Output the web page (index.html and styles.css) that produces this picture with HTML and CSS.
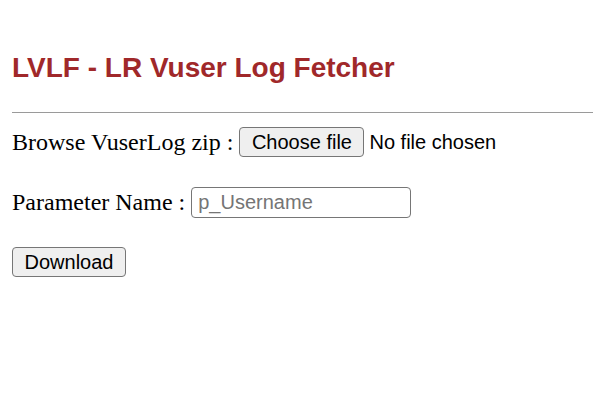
FILE: index.html
```html
<!DOCTYPE html>
<html>
<head>
<meta charset="utf-8">
<link rel="stylesheet" href="styles.css">
</head>
<body>
<h3 class="title">LVLF - LR Vuser Log Fetcher</h3>
<hr class="rule">
<form class="form">
  <p class="row">Browse VuserLog zip : <button type="button" class="btn">Choose file</button><span class="nofile">No file chosen</span></p>
  <p class="row">Parameter Name : <input class="field" type="text" placeholder="p_Username"></p>
  <p class="row"><button type="button" class="btn">Download</button></p>
</form>
</body>
</html>
```
FILE: styles.css
```css
html, body { margin: 0; padding: 0; background: #fff; }
body {
  padding: 52px 0 0 12px;
  font-family: "Liberation Serif", "Times New Roman", serif;
  font-size: 24px;
  color: #000;
}
.title {
  margin: 0;
  font-family: "Liberation Sans", Arial, sans-serif;
  font-size: 28px;
  line-height: 32px;
  font-weight: bold;
  color: #a0282a;
}
.rule {
  margin: 28px 0 11px 0;
  border: 0;
  border-top: 1px solid #9a9a9a;
  height: 0;
}
.form { margin: 0; }
.row {
  margin: 0 0 24px 0;
  height: 36px;
  line-height: 36px;
  display: flex;
  align-items: center;
  white-space: pre;
}
.btn {
  font-family: "Liberation Sans", Arial, sans-serif;
  font-size: 20px;
  height: 30px;
  padding: 0 11.5px;
  margin: 0;
  background: #efefef;
  border: 1px solid #767676;
  border-radius: 4px;
  color: #000;
  line-height: 28px;
}
.row .btn + .nofile { margin-left: 5px; }
.nofile {
  font-family: "Liberation Sans", Arial, sans-serif;
  font-size: 20px;
}
.field {
  box-sizing: border-box;
  width: 220px;
  height: 31px;
  margin: 0;
  padding: 0 6px;
  font-family: "Liberation Sans", Arial, sans-serif;
  font-size: 20px;
  border: 1px solid #767676;
  border-radius: 4px;
  outline: none;
}
.field::placeholder { color: #757575; }
```
